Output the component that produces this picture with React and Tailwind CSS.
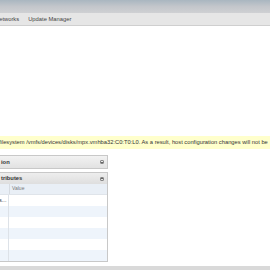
export default function App() {
  const rows = ['s...', '', '', '', '', ''];
  return (
    <div className="w-[270px] h-[270px] overflow-hidden bg-white flex flex-col font-['Liberation_Sans',Arial,sans-serif] text-[#333]">
      <div className="h-[13px] shrink-0 bg-gradient-to-b from-[#a9b6c0] via-[#c3c6cb] to-[#cfd0d3]" />
      <div className="h-[13px] shrink-0 bg-[#e6e6e6] border-b border-[#cfcfcf] flex items-center gap-[9px] text-[5.8px] text-[#444] whitespace-nowrap -ml-[5px]">
        <span>Networks</span>
        <span>Update Manager</span>
      </div>
      <div className="h-[110px] shrink-0" />
      <div className="h-[13px] shrink-0 bg-[#ffffcc] flex items-center whitespace-nowrap text-[5.75px] text-[#333] -ml-[1px]">
        filesystem /vmfs/devices/disks/mpx.vmhba32:C0:T0:L0. As a result, host configuration changes will not be
      </div>
      <div className="h-[6px] shrink-0" />
      <div className="w-[109px] -ml-[1px] flex flex-col gap-[3px]">
        <div className="h-[14px] border border-[#c8c8c8] bg-gradient-to-b from-[#f2f2f2] to-[#e2e2e2] flex items-center justify-between pl-[1px] pr-[3px] text-[5.8px] font-bold text-[#333]">
          <span>ion</span>
          <span className="w-[4px] h-[4px] border border-[#888] rounded-[1px] flex items-center justify-center">
            <span className="w-[2px] h-[1px] bg-[#666]" />
          </span>
        </div>
        <div className="border border-[#c8c8c8] flex flex-col">
          <div className="h-[11px] bg-gradient-to-b from-[#eeeeee] to-[#dedede] flex items-center justify-between pl-[1px] pr-[3px] text-[5.8px] font-bold text-[#333]">
            <span>tributes</span>
            <span className="w-[4px] h-[4px] border border-[#888] rounded-[1px] flex items-center justify-center">
              <span className="w-[2px] h-[1px] bg-[#666]" />
            </span>
          </div>
          <div className="h-[11px] bg-[#e9eff6] border-b border-[#dfe4ea] flex text-[5px] text-[#777]">
            <div className="w-[10px] border-r border-[#d6dbe1]" />
            <div className="pl-[2px] flex items-center">Value</div>
          </div>
          {rows.map((r, i) => (
            <div key={i} className={`h-[11px] flex text-[5.6px] ${i % 2 ? 'bg-[#eef4fb]' : 'bg-white'}`}>
              <div className="w-[10px] border-r border-[#dde2e8] flex items-center overflow-hidden whitespace-nowrap -ml-[1px]">{r}</div>
              <div />
            </div>
          ))}
        </div>
      </div>
      <div className="flex-1" />
      <div className="h-[4px] shrink-0 bg-[#d9d9d9]" />
    </div>
  );
}
